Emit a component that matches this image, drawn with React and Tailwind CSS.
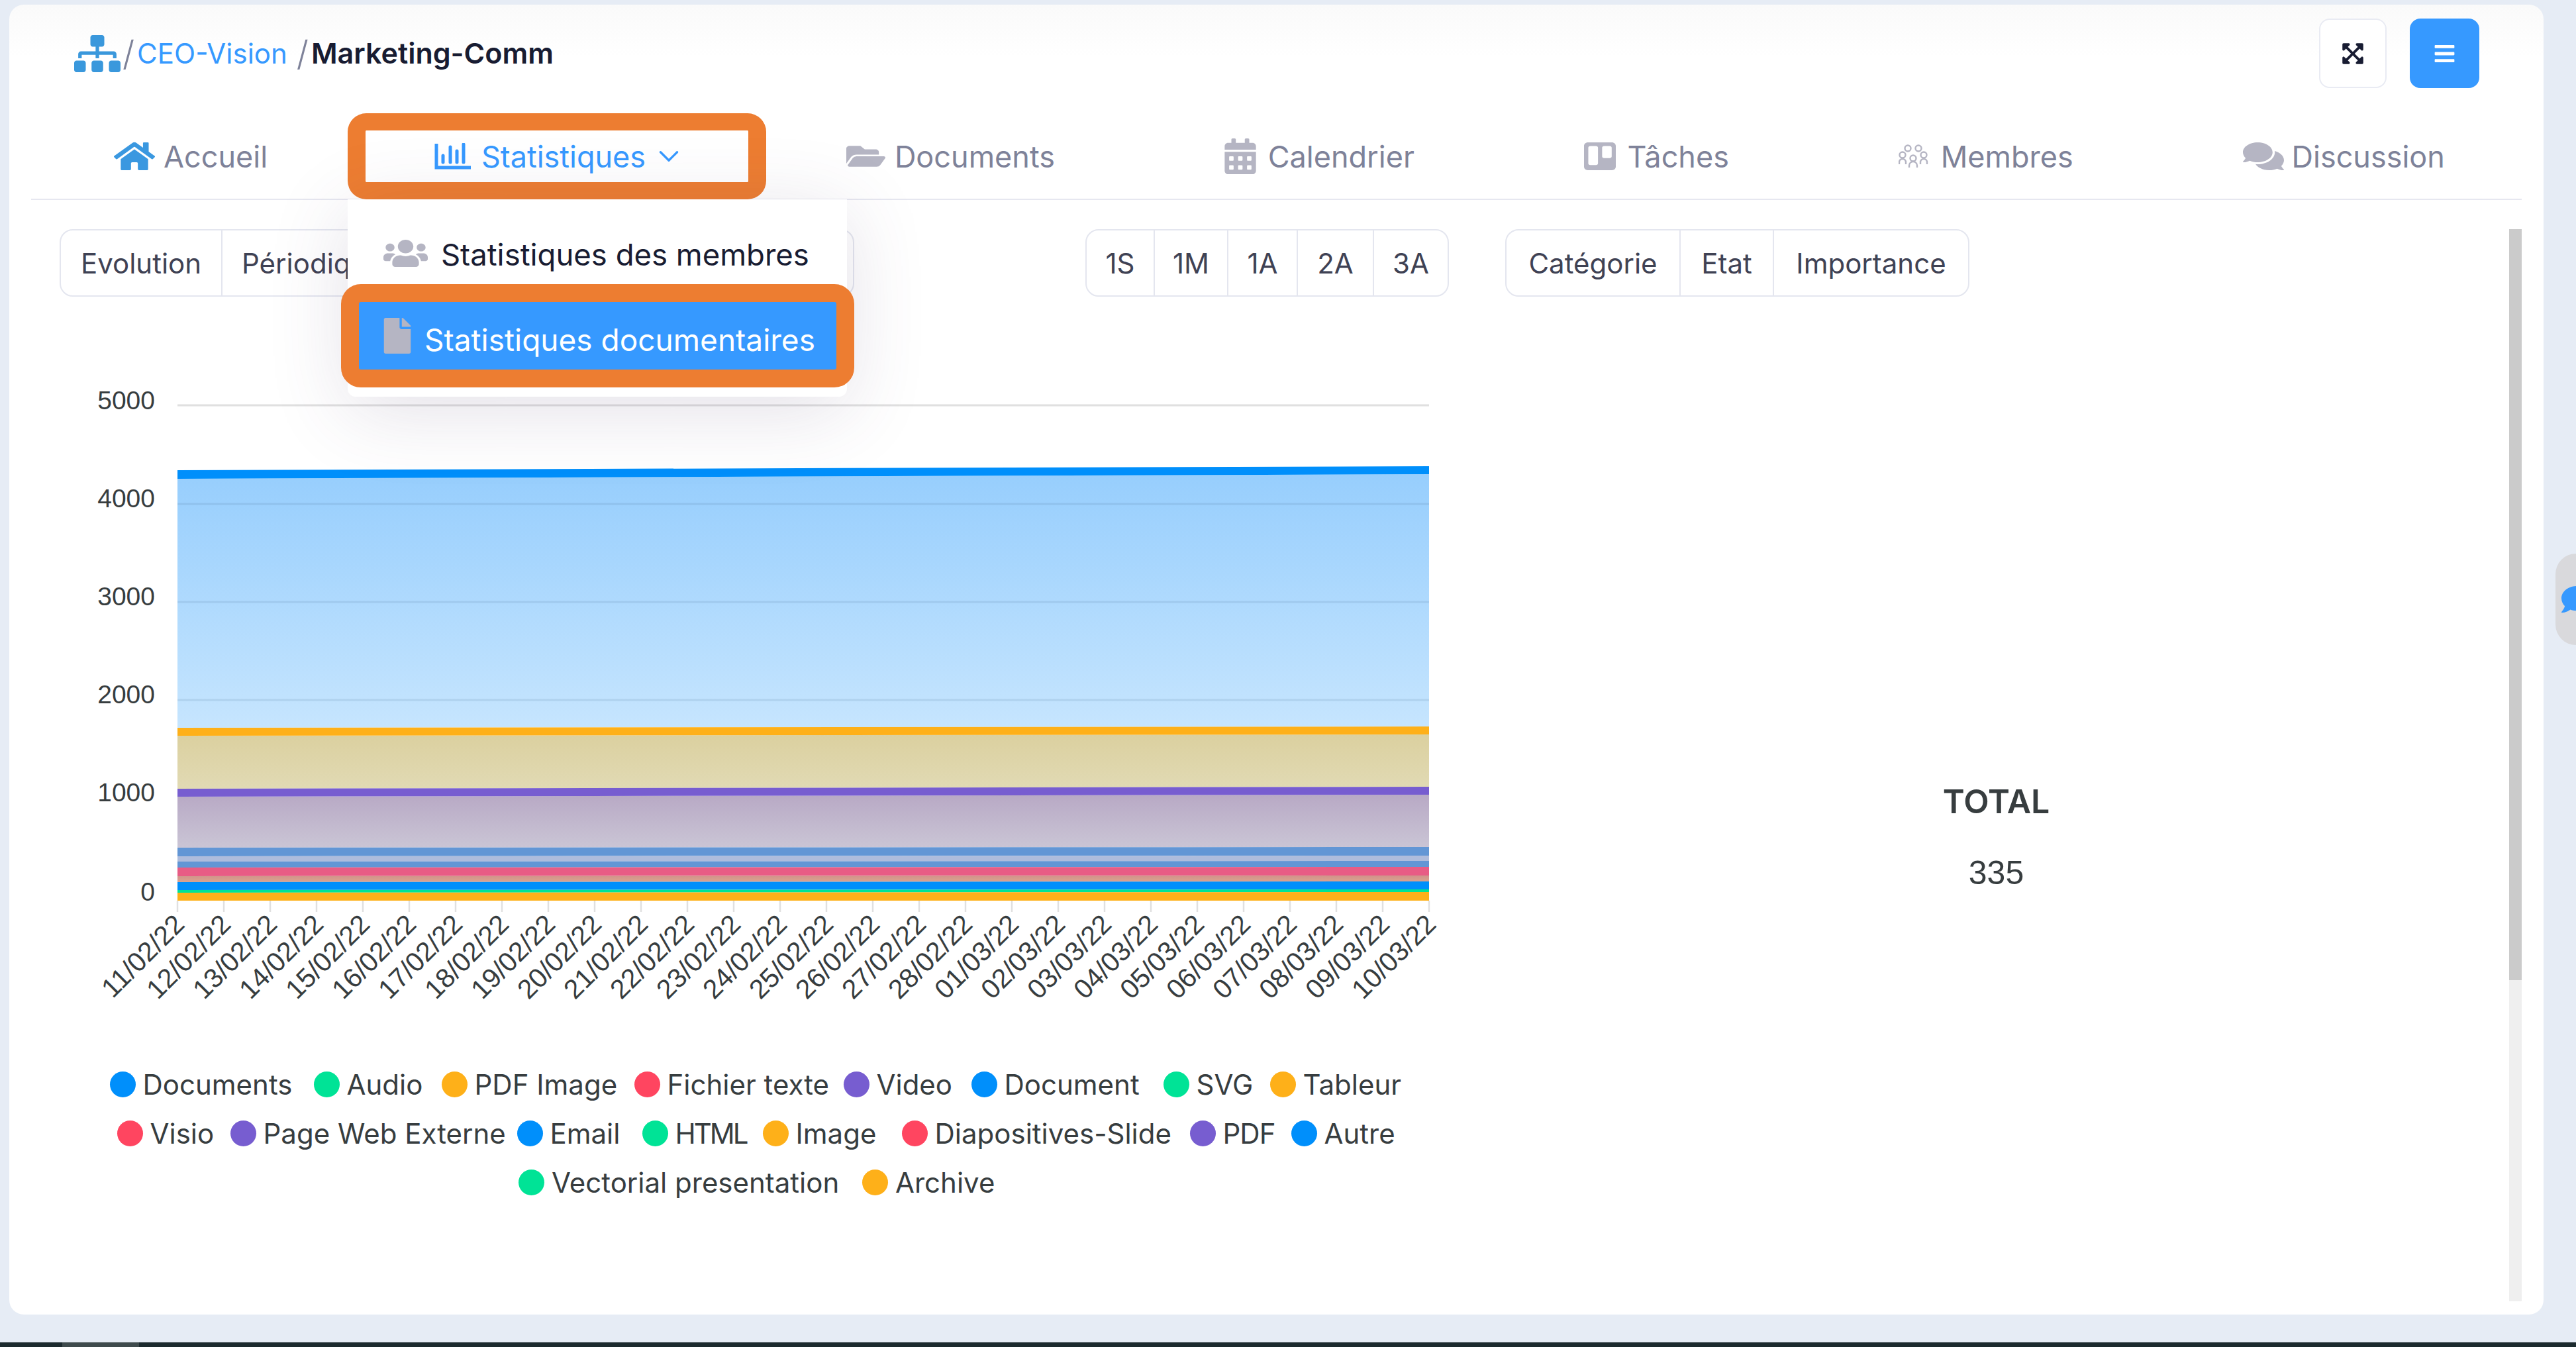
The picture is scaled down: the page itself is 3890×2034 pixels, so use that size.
import React from "react";
import { FaSitemap, FaHome, FaFolderOpen, FaCalendarAlt, FaTrello, FaComments, FaUsers, FaFile, FaExpandArrowsAlt, FaBars, FaComment } from "react-icons/fa";
import { ChevronDown } from "lucide-react";

const X0 = 90, Y0 = 470;
const XR = 2158;

function Band({ l1, l2, r1, r2, fill }) {
  const L = 268 - X0, R = XR - X0;
  return <polygon points={`${L},${l1 - Y0} ${R},${r1 - Y0} ${R},${r2 - Y0} ${L},${l2 - Y0}`} fill={fill} />;
}

const dates = [];
for (let d = 11; d <= 28; d++) dates.push(`${d}/02/22`);
for (let d = 1; d <= 10; d++) dates.push(`${String(d).padStart(2, "0")}/03/22`);

function Chart() {
  const yLabels = [["5000", 618], ["4000", 766], ["3000", 914], ["2000", 1062], ["1000", 1210], ["0", 1360]];
  return (
    <svg width="2100" height="1060" viewBox="0 0 2100 1060" className="block font-['Liberation_Sans',Arial,sans-serif]">
      <defs>
        <linearGradient id="gb" x1="0" x2="0" y1="0" y2="1"><stop offset="0" stopColor="#97cefd" /><stop offset="1" stopColor="#c6e5fe" /></linearGradient>
        <linearGradient id="go" x1="0" x2="0" y1="0" y2="1"><stop offset="0" stopColor="#dbd09f" /><stop offset="1" stopColor="#e1dab4" /></linearGradient>
        <linearGradient id="gp" x1="0" x2="0" y1="0" y2="1"><stop offset="0" stopColor="#b8a9c5" /><stop offset="1" stopColor="#cac5d5" /></linearGradient>
        <linearGradient id="gr" x1="0" x2="0" y1="0" y2="1"><stop offset="0" stopColor="#d0928a" /><stop offset="1" stopColor="#dba48f" /></linearGradient>
      </defs>
      <line x1={268 - X0} x2={XR - X0} y1={612 - Y0} y2={612 - Y0} stroke="#e0e0e0" strokeWidth="3" />
      <Band l1={723} l2={1099} r1={716} r2={1097} fill="url(#gb)" />
      <Band l1={710} l2={723} r1={704} r2={716} fill="#008ffb" />
      <Band l1={1111} l2={1191} r1={1109} r2={1188} fill="url(#go)" />
      <Band l1={1099} l2={1111} r1={1097} r2={1109} fill="#feb019" />
      <Band l1={1203} l2={1280} r1={1200} r2={1279} fill="url(#gp)" />
      <Band l1={1191} l2={1203} r1={1188} r2={1200} fill="#775dd0" />
      <Band l1={1280} l2={1293} r1={1279} r2={1292} fill="#6296d5" />
      <Band l1={1293} l2={1301} r1={1292} r2={1300} fill="#aebcdc" />
      <Band l1={1301} l2={1310} r1={1300} r2={1309} fill="#6296d5" />
      <Band l1={1310} l2={1323} r1={1309} r2={1322} fill="#e85c85" />
      <Band l1={1323} l2={1332} r1={1322} r2={1331} fill="url(#gr)" />
      <Band l1={1332} l2={1344} r1={1331} r2={1343} fill="#008ffb" />
      <Band l1={1344} l2={1348} r1={1343} r2={1347} fill="#00e396" />
      <Band l1={1348} l2={1360} r1={1347} r2={1360} fill="#feb019" />
      {[761, 909, 1057].map((y) => (
        <line key={y} x1={268 - X0} x2={XR - X0} y1={y - Y0} y2={y - Y0} stroke="#4a6a90" strokeOpacity="0.14" strokeWidth="3" />
      ))}
      {yLabels.map(([t, y]) => (
        <text key={t} x={234 - X0} y={y - Y0} textAnchor="end" fontSize="39" fill="#373d3f">{t}</text>
      ))}
      {dates.map((d, i) => {
        const tx = 268 - X0 + i * 70;
        return (
          <g key={d}>
            <line x1={tx} x2={tx} y1={1360 - Y0} y2={1377 - Y0} stroke="#e0e0e0" strokeWidth="2.5" />
            <text x={tx + 13} y={1398 - Y0} textAnchor="end" fontSize="41" fill="#373d3f" transform={`rotate(-45 ${tx + 13} ${1398 - Y0})`}>{d}</text>
          </g>
        );
      })}
    </svg>
  );
}

const C = { b: "bg-[#008ffb]", g: "bg-[#00e396]", o: "bg-[#feb019]", r: "bg-[#ff4560]", p: "bg-[#775dd0]" };
const legend = [
  [
    ["Documents", C.b, "w-[225px]"], ["Audio", C.g, "w-[110px]"], ["PDF Image", C.o, "w-[208px]"], ["Fichier texte", C.r, "w-[233px]"],
    ["Video", C.p, "w-[110px]"], ["Document", C.b, "w-[207px]"], ["SVG", C.g, "w-[78px]"], ["Tableur", C.o, "w-[147px]"],
  ],
  [
    ["Visio", C.r, "w-[88px]"], ["Page Web Externe", C.p, "w-[350px]"], ["Email", C.b, "w-[106px]"], ["HTML", C.g, "w-[99px] tracking-[-3px]"],
    ["Image", C.o, "w-[127px]"], ["Diapositives-Slide", C.r, "w-[352px]"], ["PDF", C.p, "w-[70px] tracking-[-1px]"], ["Autre", C.b, "w-[104px]"],
  ],
  [["Vectorial presentation", C.g, "w-[436px]"], ["Archive", C.o, "w-[145px]"]],
];

function Legend() {
  return (
    <div className="mt-[83px] flex flex-col gap-[25px]">
      {legend.map((row, i) => (
        <div key={i} className="flex h-[49px] items-center justify-center gap-[33px]">
          {row.map(([t, c, w]) => (
            <div key={t} className="flex items-center gap-[11px] text-[42px] leading-none whitespace-nowrap text-[#373d3f]">
              <span className={`h-[39px] w-[39px] shrink-0 rounded-full ${c}`} />
              <span className={w}>{t}</span>
            </div>
          ))}
        </div>
      ))}
    </div>
  );
}

function Group({ cells, className }) {
  return (
    <div className={`flex h-[102px] overflow-hidden rounded-[20px] border-2 border-[#e4e6ef] text-[42px] text-[#3f4254] ${className}`}>
      {cells.map(([t, w], i) => (
        <div key={t} className={`flex h-full shrink-0 items-center justify-center ${w} ${i ? "border-l-2 border-[#e4e6ef]" : ""}`}>{t}</div>
      ))}
    </div>
  );
}

function StatIcon() {
  return (
    <svg width="56" height="40" viewBox="0 0 56 40" fill="none" stroke="#3699ff" strokeWidth="5">
      <path d="M3 1V37H55" />
      <path d="M13 19V29M24 6V29M34 12V29M44 2V29" strokeLinecap="round" />
    </svg>
  );
}

function GroupIcon() {
  return (
    <svg width="46" height="36" viewBox="0 0 46 36" fill="none" stroke="#b5b5c3" strokeWidth="2.4">
      <circle cx="14" cy="6" r="4.5" /><circle cx="30" cy="6" r="4.5" />
      <circle cx="6" cy="16" r="4.5" /><circle cx="38" cy="16" r="4.5" /><circle cx="22" cy="21" r="4.5" />
      <path d="M1 30v-3a5 5 0 0 1 10 0v3M33 30v-3a5 5 0 0 1 10 0v3M16 35v-3a6 6 0 0 1 12 0v3" />
    </svg>
  );
}

function NavItem({ icon, text, gap }) {
  return (
    <div className={`flex items-center ${gap} text-[45px] leading-none text-[#7e8299]`}>
      {icon}
      <span>{text}</span>
    </div>
  );
}

export default function App() {
  return (
    <div className="relative flex h-[2034px] w-[3890px] flex-col overflow-hidden bg-[#e6ecf5] font-['Inter',sans-serif]">
      <div className="mt-[7px] ml-[14px] h-[1978px] w-[3827px] shrink-0 rounded-[22px] bg-gradient-to-b from-[#fafafa] to-white to-[4%] pt-[21px]">
        <header className="flex h-[105px] items-center justify-between pr-[97px] pl-[98px]">
          <div className="flex items-center text-[42px] leading-none">
            <FaSitemap className="h-[56px] w-[70px] text-[#3a98dc]" />
            <span className="ml-[3px] text-[52px] font-light text-[#7e8299]">/</span>
            <span className="ml-[4px] text-[#3699ff]">CEO-Vision</span>
            <span className="ml-[14px] text-[52px] font-light text-[#7e8299]">/</span>
            <span className="ml-[4px] text-[43px] font-semibold text-[#181c32]">Marketing-Comm</span>
          </div>
          <div className="flex gap-[35px]">
            <div className="flex h-[105px] w-[102px] items-center justify-center rounded-[16px] border-2 border-[#e9ebf3] bg-white">
              <FaExpandArrowsAlt className="h-[36px] w-[34px] text-[#181c32]" />
            </div>
            <div className="flex h-[105px] w-[105px] items-center justify-center rounded-[16px] bg-[#3699ff]">
              <FaBars className="h-[34px] w-[35px] text-white" />
            </div>
          </div>
        </header>

        <nav className="relative z-10 mx-[33px] mt-[39px] flex h-[130px] items-center justify-between border-b-2 border-[#e6e7f0] pr-[116px] pl-[125px]">
          <NavItem gap="gap-[13px]" icon={<FaHome preserveAspectRatio="none" className="h-[48px] w-[62px] text-[#3a98e0]" />} text="Accueil" />
          <div className="relative -ml-[4px] flex items-center text-[45px] leading-none text-[#3699ff]">
            <div className="absolute top-[-40px] left-[-131px] h-[130px] w-[632px] rounded-[28px] border-x-[27px] border-y-[26px] border-[#ed7d31]" />
            <StatIcon />
            <span className="ml-[15px]">Statistiques</span>
            <ChevronDown className="-mr-[13px] ml-[10px] h-[50px] w-[50px]" strokeWidth={1.6} />
            <div className="absolute top-[90px] left-[-131px] h-[298px] w-[754px] rounded-b-[12px] bg-white shadow-[0_20px_120px_rgba(82,63,105,0.16)]">
              <div className="mt-[57px] ml-[54px] flex items-center gap-[20px] text-[#181c32]">
                <FaUsers preserveAspectRatio="none" className="h-[47px] w-[67px] text-[#b5b5c3]" />
                <span className="pt-[4px] text-[45.5px]">Statistiques des membres</span>
              </div>
              <div className="absolute top-[128px] left-[-10px] flex h-[156px] w-[775px] items-center rounded-[30px] border-x-[27px] border-y-[27px] border-[#ed7d31] bg-[#3699ff] pl-[37px] text-white">
                <FaFile className="h-[54px] w-[42px] text-[#b5b5c3]" />
                <span className="ml-[20px] pt-[12px] text-[46px]">Statistiques documentaires</span>
              </div>
            </div>
          </div>
          <NavItem gap="gap-[14px]" icon={<FaFolderOpen preserveAspectRatio="none" className="h-[42px] w-[59px] text-[#b5b5c3]" />} text="Documents" />
          <NavItem gap="gap-[18px]" icon={<FaCalendarAlt className="h-[54px] w-[48px] text-[#b5b5c3]" />} text="Calendrier" />
          <NavItem gap="gap-[18px]" icon={<FaTrello preserveAspectRatio="none" className="h-[48px] w-[48px] text-[#b5b5c3]" />} text="Tâches" />
          <NavItem gap="gap-[18px]" icon={<GroupIcon />} text="Membres" />
          <NavItem gap="gap-[12px]" icon={<FaComments preserveAspectRatio="none" className="h-[48px] w-[62px] text-[#b5b5c3]" />} text="Discussion" />
        </nav>

        <main className="flex pt-[44px] pl-[76px]">
          <div className="flex-1">
            <div className="flex">
              <Group className="w-[1200px]" cells={[["Evolution", "w-[242px]"], ["Périodique", "w-[290px] justify-start! pl-[29px]"]]} />
              <Group className="ml-[349px]" cells={[["1S", "w-[101px]"], ["1M", "w-[111px]"], ["1A", "w-[105px]"], ["2A", "w-[115px]"], ["3A", "w-[113px]"]]} />
              <Group className="ml-[85px]" cells={[["Catégorie", "w-[261px]"], ["Etat", "w-[141px]"], ["Importance", "w-[295px]"]]} />
            </div>
            <div className="flex">
              <div className="mt-[22px] w-[2100px] shrink-0">
                <Chart />
                <Legend />
              </div>
              <div className="flex flex-1 flex-col items-center pt-[737px] pl-[50px] text-[#373d3f] leading-none">
                <div className="text-[50px] font-semibold">TOTAL</div>
                <div className="mt-[58px] font-['Liberation_Sans',Arial,sans-serif] text-[50px]">335</div>
              </div>
            </div>
          </div>
          <div className="mr-[33px] h-[1619px] w-[19px] shrink-0 bg-[#efefef]">
            <div className="h-[1134px] bg-[#cbcbcb]" />
          </div>
        </main>
      </div>

      <div className="absolute top-[836px] right-0 flex h-[138px] w-[31px] items-center overflow-hidden rounded-l-[40px] bg-[#d9d9dc] pl-[7px]">
        <FaComment className="h-[46px] w-[50px] shrink-0 text-[#3699ff]" />
      </div>

      <footer className="mt-auto flex h-[7px] bg-[#1c2a2e]">
        <div className="ml-[94px] w-[116px] bg-[#3e4a4c]" />
      </footer>
    </div>
  );
}
